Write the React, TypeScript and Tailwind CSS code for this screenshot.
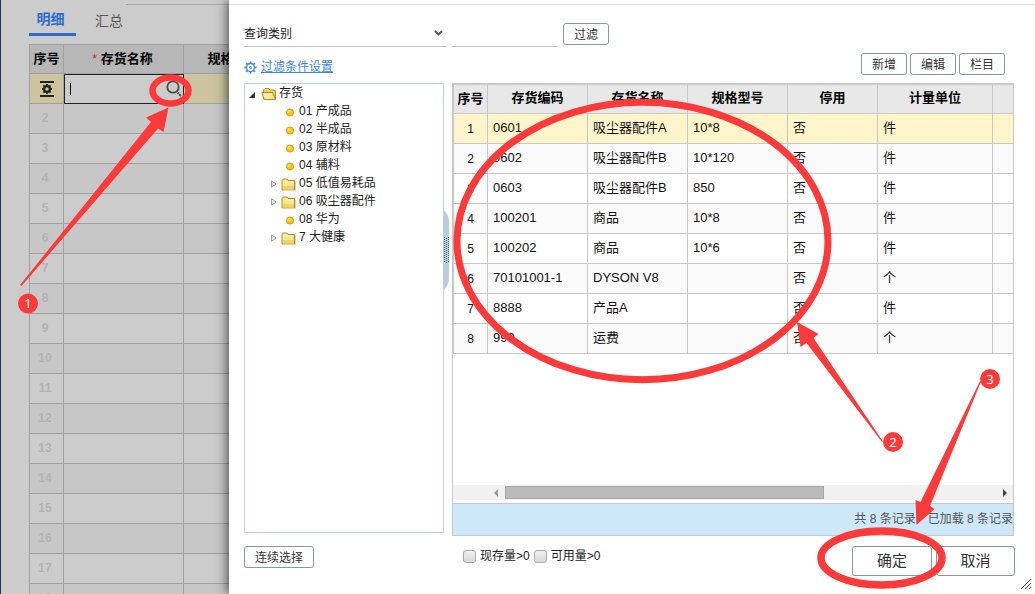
import React from "react";
import clsx from "clsx";

interface Item {
  code: string;
  name: string;
  spec: string;
  disabled: string;
  unit: string;
}

interface Category {
  label: string;
  folder?: boolean;
}

const items: Item[] = [
  { code: "0601", name: "吸尘器配件A", spec: "10*8", disabled: "否", unit: "件" },
  { code: "0602", name: "吸尘器配件B", spec: "10*120", disabled: "否", unit: "件" },
  { code: "0603", name: "吸尘器配件B", spec: "850", disabled: "否", unit: "件" },
  { code: "100201", name: "商品", spec: "10*8", disabled: "否", unit: "件" },
  { code: "100202", name: "商品", spec: "10*6", disabled: "否", unit: "件" },
  { code: "70101001-1", name: "DYSON V8", spec: "", disabled: "否", unit: "个" },
  { code: "8888", name: "产品A", spec: "", disabled: "否", unit: "件" },
  { code: "999", name: "运费", spec: "", disabled: "否", unit: "个" },
];

const categories: Category[] = [
  { label: "01 产成品" },
  { label: "02 半成品" },
  { label: "03 原材料" },
  { label: "04 辅料" },
  { label: "05 低值易耗品", folder: true },
  { label: "06 吸尘器配件", folder: true },
  { label: "08 华为" },
  { label: "7 大健康", folder: true },
];

const detailRows = Array.from({ length: 16 }, (_, i) => i + 2);

const teeth = [0, 45, 90, 135, 180, 225, 270, 315];

const GearIcon = () => (
  <svg width="13" height="13" viewBox="0 0 13 13" fill="none" stroke="#3b86ee">
    <circle cx="6.5" cy="6.5" r="4" strokeWidth="1.3" />
    <circle cx="6.5" cy="6.5" r="1" strokeWidth="0.8" />
    {teeth.map((a) => (
      <path key={a} d="M6.5 0.4V2.4" strokeWidth="1.8" transform={`rotate(${a} 6.5 6.5)`} />
    ))}
  </svg>
);

const RowMenuIcon = () => (
  <svg width="14" height="16" viewBox="0 0 14 16" fill="none" stroke="#222">
    <path d="M0 1H14M0 15H14" strokeWidth="2" />
    <circle cx="7" cy="8" r="2.9" strokeWidth="2.2" />
    {teeth.map((a) => (
      <path key={a} d="M7 3V5" strokeWidth="1.8" transform={`rotate(${a} 7 8)`} />
    ))}
  </svg>
);

const SearchIcon = () => (
  <svg width="18" height="18" viewBox="0 0 18 18" fill="none" stroke="#4d4d4d">
    <circle cx="8" cy="7" r="5.7" strokeWidth="1.8" />
    <path d="M12.5 12.5L13.7 13.7M14.3 14.3L16 16" strokeWidth="2" />
  </svg>
);

const FolderIcon = () => (
  <svg width="15" height="13" viewBox="0 0 15 13">
    <path d="M1 2.5L2.3 1H5.8L7 2.5H13.5V12H1Z" fill="#fbe48b" stroke="#b58a16" />
    <path d="M2 4H12.5" stroke="#fffbe0" />
    <path d="M2 8H13V11.5H2Z" fill="#f3d264" />
    <path d="M14.5 4V12.5H2" stroke="#d8d3c4" fill="none" />
  </svg>
);

const FolderOpenIcon = () => (
  <svg width="16" height="14" viewBox="0 0 16 14">
    <path d="M2.5 12V3L4 1.5H7.5L9 3H13.5L14.5 4V12Z" fill="#f3d264" stroke="#b58a16" />
    <path d="M0.8 5.5H11.5L14.5 12.5H3.2Z" fill="#fdeb9c" stroke="#b58a16" />
    <path d="M2 6.5H11" stroke="#fffbe0" />
  </svg>
);

const BulletIcon = () => (
  <svg width="8" height="9" viewBox="0 0 8 9">
    <circle cx="4" cy="4.5" r="3.6" fill="#fdc10f" stroke="#d98a0b" strokeWidth="0.8" />
    <circle cx="3.2" cy="3.5" r="1.5" fill="#ffe56b" />
  </svg>
);

const ExpandIcon = () => (
  <svg width="6" height="8" viewBox="0 0 6 8">
    <path d="M0.7 0.8L5 4L0.7 7.2Z" fill="#fff" stroke="#8f8f8f" />
  </svg>
);

interface ButtonProps {
  className?: string;
  children: React.ReactNode;
}

const Button: React.FC<ButtonProps> = ({ className, children }) => (
  <button
    type="button"
    className={clsx(
      "shrink-0 rounded-[3px] border border-[#8798ab] bg-white text-[#333]",
      className ?? "h-[22px] w-[46px] pt-0.5"
    )}
  >
    {children}
  </button>
);

const DetailSheet = () => (
  <section className="w-[229px] shrink-0 overflow-hidden border-l border-[#2b3348] bg-[#ccc]">
    <div className="ml-[125px] h-[5px] border-b border-[#a8a8a8]" />
    <nav className="ml-7 flex h-[31px] gap-[13px] text-sm">
      <button type="button" className="w-[47px] border-b-3 border-[#2d6bd0] pr-1 font-bold text-[#2d6bd0]">
        明细
      </button>
      <button type="button" className="w-[44px] pr-1 text-[#555]">
        汇总
      </button>
    </nav>
    <table className="mt-2 ml-7 w-[255px] table-fixed border-separate border-spacing-0 border-t border-l border-[#a0a0a0]">
      <colgroup>
        <col className="w-[34px]" />
        <col className="w-[120px]" />
        <col className="w-[100px]" />
      </colgroup>
      <thead>
        <tr className="h-[29px] bg-[#b7b7b7] text-[13px] text-black">
          <th className="border-r border-b border-[#a0a0a0] p-0">序号</th>
          <th className="border-r border-b border-[#a0a0a0] p-0 pr-0.5">
            <span className="font-normal text-[#e0203c]">*</span> 存货名称
          </th>
          <th className="border-r border-b border-[#a0a0a0] p-0">规格型号</th>
        </tr>
      </thead>
      <tbody>
        <tr className="h-[30px] bg-[#cbc49f]">
          <td className="border-r border-b border-[#a0a0a0] p-0">
            <button type="button" aria-label="行操作" className="flex w-full justify-center">
              <RowMenuIcon />
            </button>
          </td>
          <td className="border border-[#222] bg-[#ccc] p-0">
            <div className="flex h-7 items-center pl-[5px]">
              <span className="h-3 w-px bg-black" />
              <input aria-label="存货名称" className="min-w-0 flex-1 bg-transparent outline-none" />
              <button type="button" aria-label="查找">
                <SearchIcon />
              </button>
            </div>
          </td>
          <td className="border-r border-b border-[#a0a0a0] p-0" />
        </tr>
        {detailRows.map((n) => (
          <tr key={n} className="h-[30px] even:bg-[#c7c7c7]">
            <td className="border-r border-b border-[#a0a0a0] p-0 pr-[3px] pb-0.5 text-center font-bold text-[#b3b3b3]">
              {n}
            </td>
            <td className="border-r border-b border-[#a0a0a0] p-0" />
            <td className="border-r border-b border-[#a0a0a0] p-0" />
          </tr>
        ))}
        <tr className="h-[30px] bg-[#c7c7c7]">
          <td className="border-r border-[#a0a0a0] p-0 pr-[3px] pb-0.5 text-center font-bold text-[#b3b3b3]">18</td>
          <td className="border-r border-[#a0a0a0] p-0" />
          <td className="border-r border-[#a0a0a0] p-0" />
        </tr>
      </tbody>
    </table>
  </section>
);

const CategoryTree = () => (
  <div className="relative mb-[3px] w-[200px] shrink-0 border border-[#bccfdf]">
    <ul className="text-[#222]">
      <li className="flex h-[18px] items-center pl-1">
        <svg width="6" height="6" viewBox="0 0 6 6" className="mt-1">
          <path d="M6 0V6H0Z" fill="#333" />
        </svg>
        <span className="mt-0.5 ml-1.5">
          <FolderOpenIcon />
        </span>
        <span className="ml-0.5">存货</span>
      </li>
      {categories.map((c) => (
        <li key={c.label} className="flex h-[18px] items-center">
          {c.folder ? (
            <span className="flex w-[54px] items-center gap-1 pt-0.5 pl-[26px]">
              <ExpandIcon />
              <FolderIcon />
            </span>
          ) : (
            <span className="w-[54px] pt-0.5 pl-[41px]">
              <BulletIcon />
            </span>
          )}
          <span>{c.label}</span>
        </li>
      ))}
    </ul>
    <svg width="6" height="80" viewBox="0 0 6 80" className="absolute top-[126px] -right-[6px]">
      <path d="M0 0Q6 4 6 12V68Q6 76 0 80Z" fill="#b8cddd" />
      <path d="M1.5 27V53M5.5 27V53" stroke="#44647f" strokeDasharray="1 1" />
      <path d="M3.5 28V53" stroke="#44647f" strokeDasharray="1 1" />
    </svg>
  </div>
);

const headCell = "border-r border-b border-[#c8c8c8] p-0 pb-0.5";
const bodyCell = "border-r border-b border-[#c8c8c8] pt-0 pr-0 pb-0.5 pl-[5px]";

const ItemGrid = () => (
  <div className="flex min-w-0 flex-1 flex-col border border-[#c8c8c8]">
    <table className="w-full table-fixed border-separate border-spacing-0 border-t border-l border-[#c8c8c8] text-[13px] text-[#111]">
      <colgroup>
        <col className="w-[34px]" />
        <col className="w-[100px]" />
        <col className="w-[100px]" />
        <col className="w-[100px]" />
        <col className="w-[90px]" />
        <col className="w-[115px]" />
        <col />
      </colgroup>
      <thead>
        <tr className="h-[29px] bg-[#e8e8e8] text-black">
          <th className="border-r border-b border-[#c8c8c8] p-0">序号</th>
          <th className={headCell}>存货编码</th>
          <th className={headCell}>存货名称</th>
          <th className={headCell}>规格型号</th>
          <th className={headCell}>停用</th>
          <th className={headCell}>计量单位</th>
          <th className="border-b border-[#c8c8c8] p-0" />
        </tr>
      </thead>
      <tbody>
        {items.map((item, i) => (
          <tr key={item.code} className={clsx("h-[30px]", i === 0 ? "bg-[#fff5cb]" : "even:bg-[#fafafa]")}>
            <td className="border-r border-b border-[#c8c8c8] p-0 text-center text-xs">{i + 1}</td>
            <td className={bodyCell}>{item.code}</td>
            <td className={bodyCell}>{item.name}</td>
            <td className={bodyCell}>{item.spec}</td>
            <td className={bodyCell}>{item.disabled}</td>
            <td className={bodyCell}>{item.unit}</td>
            <td className="border-b border-[#c8c8c8] p-0" />
          </tr>
        ))}
      </tbody>
    </table>
    <div className="mt-auto flex h-[15px] items-center bg-[#f1f1f1] pr-[6px] pl-[41px]">
      <svg width="4" height="8" viewBox="0 0 4 8">
        <path d="M4 0V8L0 4Z" fill="#999" />
      </svg>
      <div className="ml-[7px] h-[13px] w-[319px] border border-[#a6a6a6] bg-[#bbb]" />
      <svg width="4" height="8" viewBox="0 0 4 8" className="ml-auto">
        <path d="M0 0V8L4 4Z" fill="#444" />
      </svg>
    </div>
    <div className="mt-[3px] flex h-8 items-center justify-end gap-3 border-t border-[#c8c8c8] bg-[#cce8f9] pb-0.5 text-[#555]">
      <span>共 8 条记录</span>
      <span>已加载 8 条记录</span>
    </div>
  </div>
);

const StockCheckbox: React.FC<{ label: string }> = ({ label }) => (
  <label className="flex items-center gap-1">
    <input
      type="checkbox"
      className="size-[13px] appearance-none rounded-[3px] border border-[#a9a9a9] bg-linear-to-b from-[#f0f0f0] to-[#d9d9d9]"
    />
    {label}
  </label>
);

const ItemDialog = () => (
  <main className="relative flex min-w-0 flex-1 flex-col bg-white shadow-[0_0_12px_rgba(0,0,0,0.8)]">
    <div className="h-[5px] shrink-0 border-b border-[#ddd]" />
    <div className="mt-4 flex h-[26px] shrink-0 items-center gap-[5px] pl-[15px]">
      <div className="relative h-full w-[203px] border-b border-[#c4c4c4]">
        <select aria-label="查询类别" className="h-full w-full appearance-none bg-transparent text-[#222] outline-none">
          <option>查询类别</option>
        </select>
        <svg
          width="9"
          height="6"
          viewBox="0 0 9 6"
          fill="none"
          className="pointer-events-none absolute top-[9px] right-1"
        >
          <path d="M1 1L4.5 4.5L8 1" stroke="#4b5563" strokeWidth="1.8" />
        </svg>
      </div>
      <input aria-label="查询内容" className="h-full w-[106px] border-b border-[#c4c4c4] outline-none" />
      <Button>过滤</Button>
    </div>
    <div className="mt-1.5 flex h-[22px] shrink-0 items-center gap-[3px] pr-[30px] pl-[15px]">
      <a href="#" className="mr-auto flex items-center gap-1 pt-1.5 text-[#3b86ee]">
        <GearIcon />
        <span className="underline">过滤条件设置</span>
      </a>
      <Button>新增</Button>
      <Button>编辑</Button>
      <Button>栏目</Button>
    </div>
    <div className="mt-2 flex min-h-0 flex-1 gap-2 pr-[21px] pl-[15px]">
      <CategoryTree />
      <ItemGrid />
    </div>
    <footer className="flex h-[58px] shrink-0 items-start pt-2.5 pr-[20px] pl-[15px]">
      <div className="w-[219px]">
        <Button className="h-[22px] w-[70px] pt-0.5">连续选择</Button>
      </div>
      <div className="flex gap-1 pt-0.5 text-[#222]">
        <StockCheckbox label="现存量>0" />
        <StockCheckbox label="可用量>0" />
      </div>
      <div className="ml-auto flex gap-1 text-[15px]">
        <Button className="h-[30px] w-[80px]">确定</Button>
        <Button className="h-[30px] w-[79px]">取消</Button>
      </div>
    </footer>
    <svg width="12" height="12" viewBox="0 0 12 12" className="absolute right-[3px] bottom-1">
      <path d="M1 11L11 1M5 11L11 5M9 11L11 9" stroke="#444" />
    </svg>
  </main>
);

// Red tutorial marks drawn over the whole screen
const Annotations = () => (
  <svg
    width="1035"
    height="594"
    viewBox="0 0 1035 594"
    className="pointer-events-none absolute top-0 left-0 font-[family-name:'Noto_Sans',sans-serif] text-[13px]"
  >
    <g fill="none" stroke="#fc3a3a">
      <ellipse cx="170.5" cy="90.5" rx="18" ry="13" strokeWidth="6.5" />
      <ellipse cx="642.5" cy="241" rx="185.5" ry="138.7" strokeWidth="7" />
      <ellipse cx="881.5" cy="558" rx="60.5" ry="27" strokeWidth="7.5" />
    </g>
    <g fill="#fc3a3a">
      <path d="M168.5 107.5L146 117.5L151 122L20 285L21.5 286L158 128.5L163.5 132Z" />
      <path d="M797 322L818.5 334L813.5 338L883 441.5L882 442L806.5 343L800.5 347Z" />
      <path d="M916.5 525L915.5 500L920.5 502L980 381L981 381.5L930 506L934.5 509Z" />
      <circle cx="28" cy="303.5" r="10" />
      <circle cx="893" cy="442" r="10" />
      <circle cx="990" cy="379" r="10" />
    </g>
    <g fill="#fff" textAnchor="middle">
      <text x="28" y="308">1</text>
      <text x="893" y="447">2</text>
      <text x="990" y="384">3</text>
    </g>
  </svg>
);

const App = () => (
  <div className="relative flex h-screen overflow-hidden font-['Liberation_Sans','Noto_Sans_CJK_SC',sans-serif] text-xs">
    <DetailSheet />
    <ItemDialog />
    <Annotations />
  </div>
);

export default App;
